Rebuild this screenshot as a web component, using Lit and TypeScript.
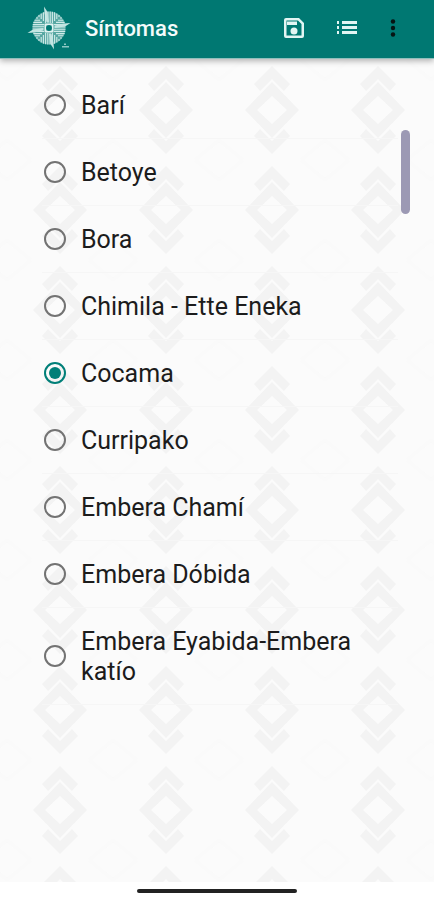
import { LitElement, html, svg, css } from "lit";
import { customElement, property, state } from "lit/decorators.js";

@customElement("app-logo")
class AppLogo extends LitElement {
  static styles = css`
    :host { display: block; width: 44px; height: 44px; }
    svg { display: block; width: 100%; height: 100%; }
    .disc { fill: #57a7a2; }
    .hub { fill: #e2f4f2; }
    .spike { fill: #c3e5e2; }
    .line { fill: none; stroke: #d0ebe9; stroke-width: 1.1; }
    .core { fill: #007872; }
    .mark { fill: #8cc7c3; }
  `;
  render() {
    const quarter = svg`
      <path class="line" d="M-1 -5V-16.5 M1.200 -5V-16.5 M3.400 -5V-16.3 M5.600 -7V-15.7 M7.800 -9V-14.5 M10 -11V-13"/>
      <path class="line" d="M5 -3.400H16.3 M7 -5.600H15.7 M9 -7.800H14.5 M11 -10H13"/>
      <path class="spike" d="M-5 -21.5L-1.500 -16L0 -6H-2.500L-4.500 -15z"/>`;
    return html`<svg viewBox="-22 -22 44 44" aria-hidden="true">
      <circle class="disc" r="16.5"></circle>
      ${[0, 90, 180, 270].map((a) => svg`<g transform=${`rotate(${a})`}>${quarter}</g>`)}
      <rect class="hub" x="-4.5" y="-4.5" width="9" height="9" rx="1"></rect>
      <path class="core" d="M-2.500 -2.500L0 -3L2.500 -2.500L3 0L2.500 2.500L0 3L-2.500 2.500L-3 0z"></path>
      <path class="mark" d="M15 15.5h2v1.500h-2z M13 18h7v1.500h-7z"></path>
    </svg>`;
  }
}

@customElement("app-bar")
class AppBar extends LitElement {
  static styles = css`
    :host {
      display: block; position: relative; background: #007872; color: #f4fbfb;
      border-bottom: 1px solid #8fbfbc; box-shadow: 0 2px 6px rgba(0, 0, 0, 0.3);
    }
    header { display: flex; align-items: center; height: 56px; padding: 0 28px 2px 27px; }
    h1 { flex: 1; margin: 0 0 0 14px; padding-top: 2px; font: 500 22px/32px Roboto, sans-serif; }
    .actions { display: flex; gap: 13px; align-items: center; }
    button { display: block; border: 0; padding: 7px; background: none; color: #e2f5f3; cursor: pointer; }
    button.more { padding: 7px 0; color: #061413; }
    .actions svg { display: block; width: 26px; height: 26px; fill: currentColor; }
  `;
  @property() heading = "";
  render() {
    return html`<header>
      <app-logo></app-logo>
      <h1>${this.heading}</h1>
      <div class="actions">
        <button aria-label="Guardar"><svg viewBox="0 0 26 26">
          <path fill-rule="evenodd" d="M5 3H18L23 8V21a2 2 0 0 1-2 2H5a2 2 0 0 1-2-2V5a2 2 0 0 1 2-2zM5.500 5.500V20.500H20.500V9L17 5.500z"/>
          <path d="M6 6.500h10v3.500H6z"/><circle cx="13" cy="16" r="3.5"/>
        </svg></button>
        <button aria-label="Lista"><svg viewBox="0 0 26 26">
          <path d="M3 6h2v3H3zM3 11h2v3H3zM3 16h2v3H3zM8 6h15v3H8zM8 11h15v3H8zM8 16h15v3H8z"/>
        </svg></button>
        <button class="more" aria-label="Más opciones"><svg viewBox="0 0 26 26">
          <circle cx="13" cy="6.500" r="2.200"/><circle cx="13" cy="13" r="2.200"/><circle cx="13" cy="19.500" r="2.200"/>
        </svg></button>
      </div>
    </header>`;
  }
}

@customElement("woven-backdrop")
class WovenBackdrop extends LitElement {
  static styles = css`
    :host { display: block; }
    svg { display: block; width: 100%; height: 100%; }
    .shape { fill: #f3f3f3; }
    .lattice { fill: none; stroke: #fafafa; stroke-width: 4; }
  `;
  render() {
    return html`<svg aria-hidden="true">
      <defs>
        <pattern id="weave" x="7" y="1" width="106" height="100" patternUnits="userSpaceOnUse">
          <path class="lattice" d="M0 20L24 0 M0 80L24 100 M82 0L106 20 M82 100L106 80"/>
          <g class="shape" transform="translate(53 50)">
            <path fill-rule="evenodd" d="M0 -28L27 0L0 28L-27 0z M0 -14L-15 0L0 14L15 0z"/>
            <path d="M0 -44L18 -26L12 -19L0 -31L-12 -19L-18 -26z"/>
            <path d="M0 44L18 26L12 19L0 31L-12 19L-18 26z"/>
          </g>
        </pattern>
      </defs>
      <rect width="100%" height="100%" fill="url(#weave)"></rect>
    </svg>`;
  }
}

@customElement("choice-list")
class ChoiceList extends LitElement {
  static styles = css`
    :host { display: block; }
    fieldset { margin: 0; padding: 0; border: 0; min-width: 0; }
    label {
      display: flex; align-items: center; gap: 15px; padding: 17px 24px 17px 2px;
      border-bottom: 1px solid #f6f6f6; font: 400 25px/30px Roboto, sans-serif; color: #1c1c1c; cursor: pointer;
    }
    span { padding-top: 2px; }
    input {
      appearance: none; flex: none; display: grid; place-items: center; width: 22px; height: 22px;
      margin: 0; border: 2px solid #737373; border-radius: 50%;
    }
    input:checked { border-color: #007f78; }
    input:checked::before { content: ""; width: 12px; height: 12px; border-radius: 50%; background: #007f78; }
  `;
  @property({ attribute: false }) options: string[] = [];
  @state() private selected = "Cocama";
  render() {
    return html`<fieldset aria-label="Pueblo">
      ${this.options.map((name) => html`<label>
        <input type="radio" name="pueblo" .value=${name} .checked=${name === this.selected}
          @change=${() => (this.selected = name)}>
        <span>${name}</span>
      </label>`)}
    </fieldset>`;
  }
}

@customElement("app-root")
class AppRoot extends LitElement {
  static styles = css`
    :host { display: flex; flex-direction: column; min-height: 100vh; background: #ffffff; }
    app-bar { z-index: 1; }
    main { position: relative; flex: 1; background: #fbfbfb; padding: 13px 36px 24px 42px; }
    woven-backdrop { position: absolute; inset: 0; }
    choice-list { position: relative; }
    .thumb { position: absolute; top: 71px; right: 24px; width: 9px; height: 84px; border-radius: 5px; background: #9c99b4; }
    footer { display: flex; justify-content: center; padding: 7px 0; }
    .handle { width: 37%; height: 4px; border-radius: 2px; background: #222222; }
  `;
  private names = [
    "Barí", "Betoye", "Bora", "Chimila - Ette Eneka", "Cocama", "Curripako",
    "Embera Chamí", "Embera Dóbida", "Embera Eyabida-Embera katío",
  ];
  render() {
    return html`
      <app-bar heading="Síntomas"></app-bar>
      <main>
        <woven-backdrop></woven-backdrop>
        <choice-list .options=${this.names}></choice-list>
        <div class="thumb"></div>
      </main>
      <footer><div class="handle"></div></footer>`;
  }
}
